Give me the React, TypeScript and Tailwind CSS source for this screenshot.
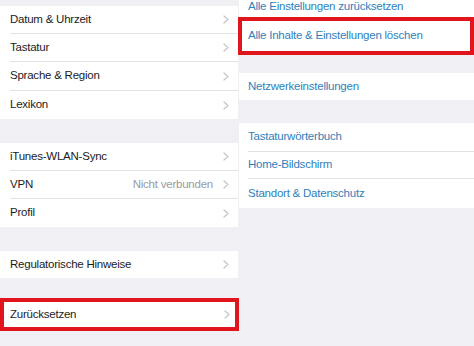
import React from 'react';

const Chevron: React.FC = () => (
    <svg width="6" height="9" viewBox="0 0 6 9" className="shrink-0">
        <polyline points="1,1 5,4.5 1,8" fill="none" stroke="#c4c4c9" strokeWidth="1.2" strokeLinecap="round" strokeLinejoin="round" />
    </svg>
);

type RowProps = { label: string; value?: string; h?: string; last?: boolean; pl?: string; pr?: string };

const LeftRow: React.FC<RowProps> = ({ label, value, h = 'h-[28px]', last, pl = 'pl-[10px]', pr = 'pr-[9px]' }) => (
    <div className={`flex items-center bg-white ${pl} ${h}`}>
        <div className={`flex h-full flex-1 items-center ${pr} ${last ? '' : 'border-b border-[#e2e2e6]'}`}>
            <span className="flex-1 text-[11.5px] tracking-[-0.02em] text-[#1c1c1e]">{label}</span>
            {value && <span className="mr-[10px] text-[11.5px] tracking-[-0.02em] text-[#9a9aa0]">{value}</span>}
            <Chevron />
        </div>
    </div>
);

const RightRow: React.FC<RowProps> = ({ label, h = 'h-[28px]', last, pl = 'pl-[9px]' }) => (
    <div className={`flex items-center bg-white ${pl} ${h}`}>
        <div className={`flex h-full flex-1 items-center ${last ? '' : 'border-b border-[#e2e2e6]'}`}>
            <span className="text-[11.5px] tracking-[-0.02em] text-[#2f7fbd]">{label}</span>
        </div>
    </div>
);

export default function App() {
    return (
        <div className="flex h-[346px] w-[474px] overflow-hidden bg-[#efeff4] font-['Liberation_Sans',Arial,sans-serif]">
            {/* left column */}
            <div className="flex w-[238px] flex-col">
                <div className="h-[6px]" />
                <LeftRow label="Datum & Uhrzeit" />
                <LeftRow label="Tastatur" />
                <LeftRow label="Sprache & Region" h="h-[29px]" />
                <LeftRow label="Lexikon" last />
                <div className="h-[24px]" />
                <LeftRow label="iTunes-WLAN-Sync" />
                <LeftRow label="VPN" value="Nicht verbunden" />
                <LeftRow label="Profil" last />
                <div className="h-[24px]" />
                <LeftRow label="Regulatorische Hinweise" h="h-[27px]" last />
                <div className="h-[20px]" />
                <div className="w-[239px] border-4 border-[#e0161c]">
                    <LeftRow label="Zurücksetzen" h="h-[25px]" pl="pl-[6px]" pr="pr-[5px]" last />
                </div>
            </div>

            {/* right column */}
            <div className="ml-px flex flex-1 flex-col">
                <div className="flex h-[17px] items-start bg-white pl-[9px]">
                    <span className="-mt-[1px] text-[11.5px] leading-[14px] tracking-[-0.02em] text-[#2f7fbd]">Alle Einstellungen zurücksetzen</span>
                </div>
                <div className="-ml-px border-4 border-[#e0161c]">
                    <RightRow label="Alle Inhalte & Einstellungen löschen" h="h-[30px]" pl="pl-[6px]" last />
                </div>
                <div className="h-[18px]" />
                <RightRow label="Netzwerkeinstellungen" h="h-[27px]" last />
                <div className="h-[23px]" />
                <RightRow label="Tastaturwörterbuch" h="h-[29px]" />
                <RightRow label="Home-Bildschirm" h="h-[27px]" />
                <RightRow label="Standort & Datenschutz" h="h-[29px]" last />
            </div>
        </div>
    );
}
